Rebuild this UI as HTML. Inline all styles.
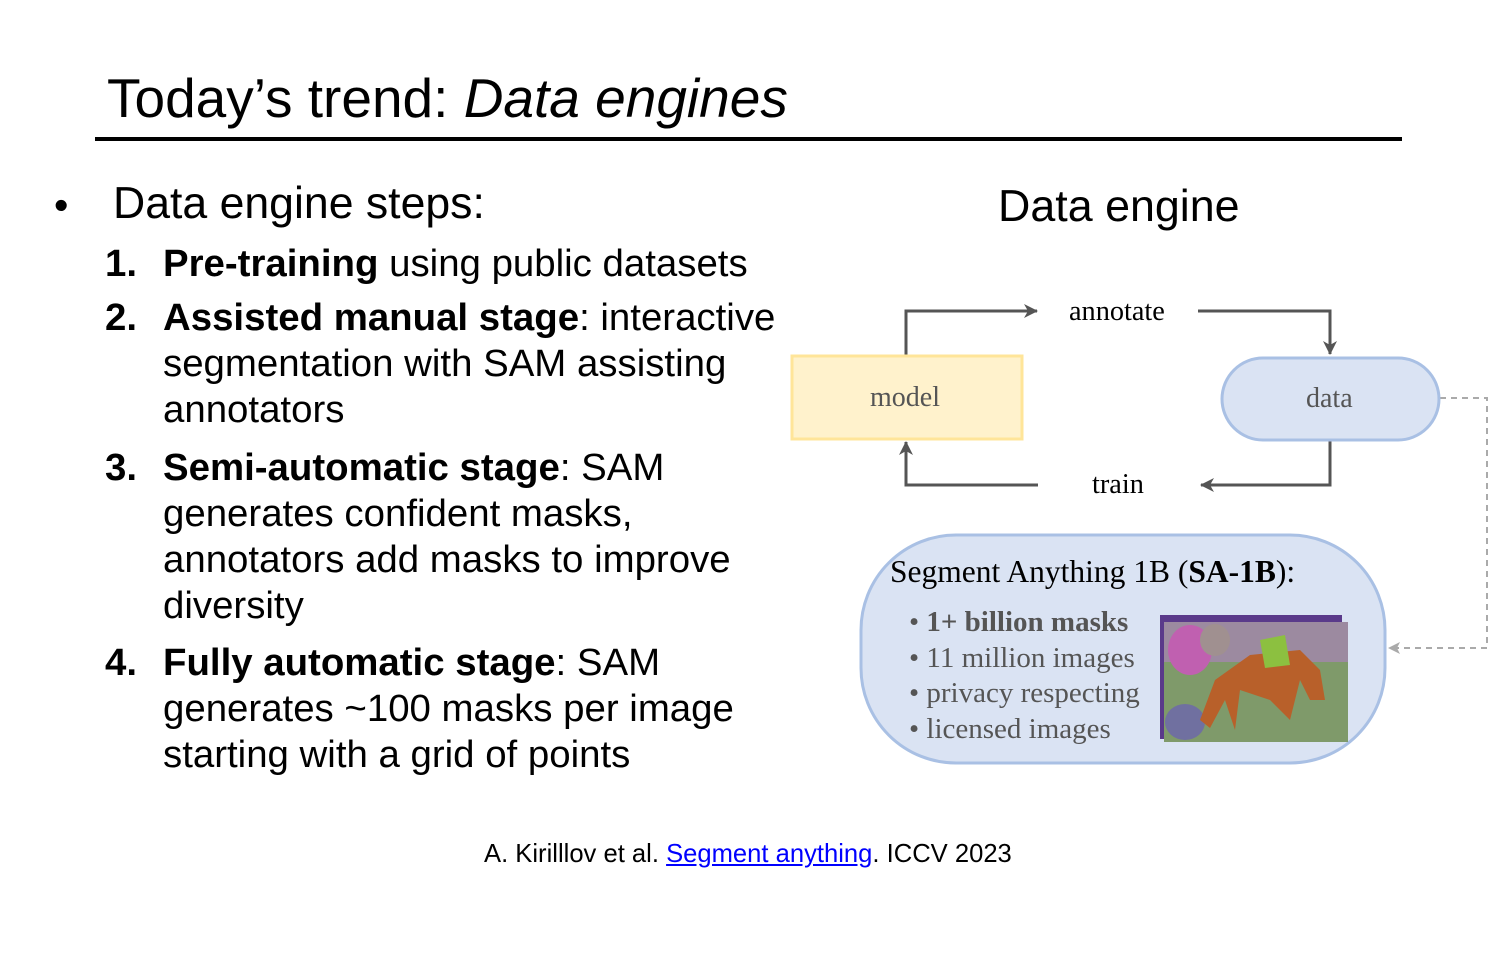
<!DOCTYPE html>
<html><head><style>
body{margin:0;width:1512px;height:961px;background:#fff;position:relative;overflow:hidden;font-family:"Liberation Sans",Arial,sans-serif;color:#000}
.a{position:absolute;white-space:nowrap}
.s{font-family:"Liberation Serif",serif}
.it{font-size:38.4px;line-height:46px}
.it b{font-weight:bold}
.num{position:absolute;left:-58px;font-weight:bold}
</style></head><body>
<div class="a" style="left:107px;top:66px;font-size:55px">Today’s trend: <i>Data engines</i></div>
<div class="a" style="left:95px;top:137px;width:1307px;height:4px;background:#000"></div>
<div class="a" style="left:54px;top:182px;font-size:41px">•</div>
<div class="a" style="left:113px;top:179px;font-size:44.6px">Data engine steps:</div>
<div class="a it" style="left:163px;top:241px"><span class="num">1.</span><b>Pre-training</b> using public datasets</div>
<div class="a it" style="left:163px;top:295px"><span class="num">2.</span><b>Assisted manual stage</b>: interactive<br>segmentation with SAM assisting<br>annotators</div>
<div class="a it" style="left:163px;top:445px"><span class="num">3.</span><b>Semi-automatic stage</b>: SAM<br>generates confident masks,<br>annotators add masks to improve<br>diversity</div>
<div class="a it" style="left:163px;top:640px"><span class="num">4.</span><b>Fully automatic stage</b>: SAM<br>generates ~100 masks per image<br>starting with a grid of points</div>
<div class="a" style="left:998px;top:181px;font-size:44.8px">Data engine</div>
<svg class="a" style="left:0;top:0" width="1512" height="961">
<defs><marker id="ar" markerWidth="16" markerHeight="16" refX="13" refY="7" orient="auto" markerUnits="userSpaceOnUse"><path d="M0,0 L14,7 L0,14 L4,7z" fill="#555"/></marker>
<marker id="ag" markerWidth="14" markerHeight="14" refX="11" refY="6" orient="auto" markerUnits="userSpaceOnUse"><path d="M0,0 L12,6 L0,12 L3,6z" fill="#aaa"/></marker></defs>
<polyline points="906,355 906,311 1037,311" fill="none" stroke="#555" stroke-width="3" marker-end="url(#ar)"/>
<polyline points="1198,311 1330,311 1330,354" fill="none" stroke="#555" stroke-width="3" marker-end="url(#ar)"/>
<polyline points="1330,440 1330,485 1201,485" fill="none" stroke="#555" stroke-width="3" marker-end="url(#ar)"/>
<polyline points="1038,485 906,485 906,442" fill="none" stroke="#555" stroke-width="3" marker-end="url(#ar)"/>
<polyline points="1440,398 1487,398 1487,648 1389,648" fill="none" stroke="#aaa" stroke-width="2" stroke-dasharray="6,5" marker-end="url(#ag)"/>
<rect x="792" y="356" width="230" height="83" fill="#fff2cc" stroke="#ffe599" stroke-width="3"/>
<rect x="1222" y="358" width="217" height="82" rx="41" fill="#dae3f3" stroke="#a9c0e4" stroke-width="3"/>
<rect x="861" y="535" width="524" height="228" rx="95" fill="#dae3f3" stroke="#a9c0e4" stroke-width="3"/>
<rect x="1160" y="615" width="182" height="124" fill="#5a3a8a"/>
<rect x="1164" y="622" width="184" height="120" fill="#7f9a6a"/>
<rect x="1164" y="622" width="184" height="40" fill="#9c8aa0"/>
<ellipse cx="1190" cy="650" rx="22" ry="25" fill="#c060b0"/>
<ellipse cx="1215" cy="640" rx="15" ry="16" fill="#a09090"/>
<ellipse cx="1185" cy="722" rx="20" ry="18" fill="#7070a0"/>
<path d="M1200,720 L1215,680 L1250,655 L1300,650 L1320,670 L1325,700 L1310,700 L1300,680 L1290,720 L1270,700 L1240,690 L1235,730 L1225,700 L1210,728z" fill="#b8602a"/>
<path d="M1260,640 L1285,635 L1290,665 L1265,668z" fill="#8cc040"/>
</svg>
<div class="a s" style="left:870px;top:382px;font-size:28px;color:#555">model</div>
<div class="a s" style="left:1306px;top:383px;font-size:28px;color:#555">data</div>
<div class="a s" style="left:1069px;top:296px;font-size:28.3px">annotate</div>
<div class="a s" style="left:1092px;top:469px;font-size:28.3px">train</div>
<div class="a s" style="left:890px;top:554px;font-size:31.5px">Segment Anything 1B (<b>SA-1B</b>):</div>
<div class="a s" style="left:909px;top:605px;font-size:29px;line-height:35.5px;color:#555">• <b>1+ billion masks</b><br>• 11 million images<br>• privacy respecting<br>• licensed images</div>
<div class="a" style="left:484px;top:840px;font-size:25.6px">A. Kirilllov et al. <span style="color:#00f;text-decoration:underline">Segment anything</span>. ICCV 2023</div>
</body></html>
